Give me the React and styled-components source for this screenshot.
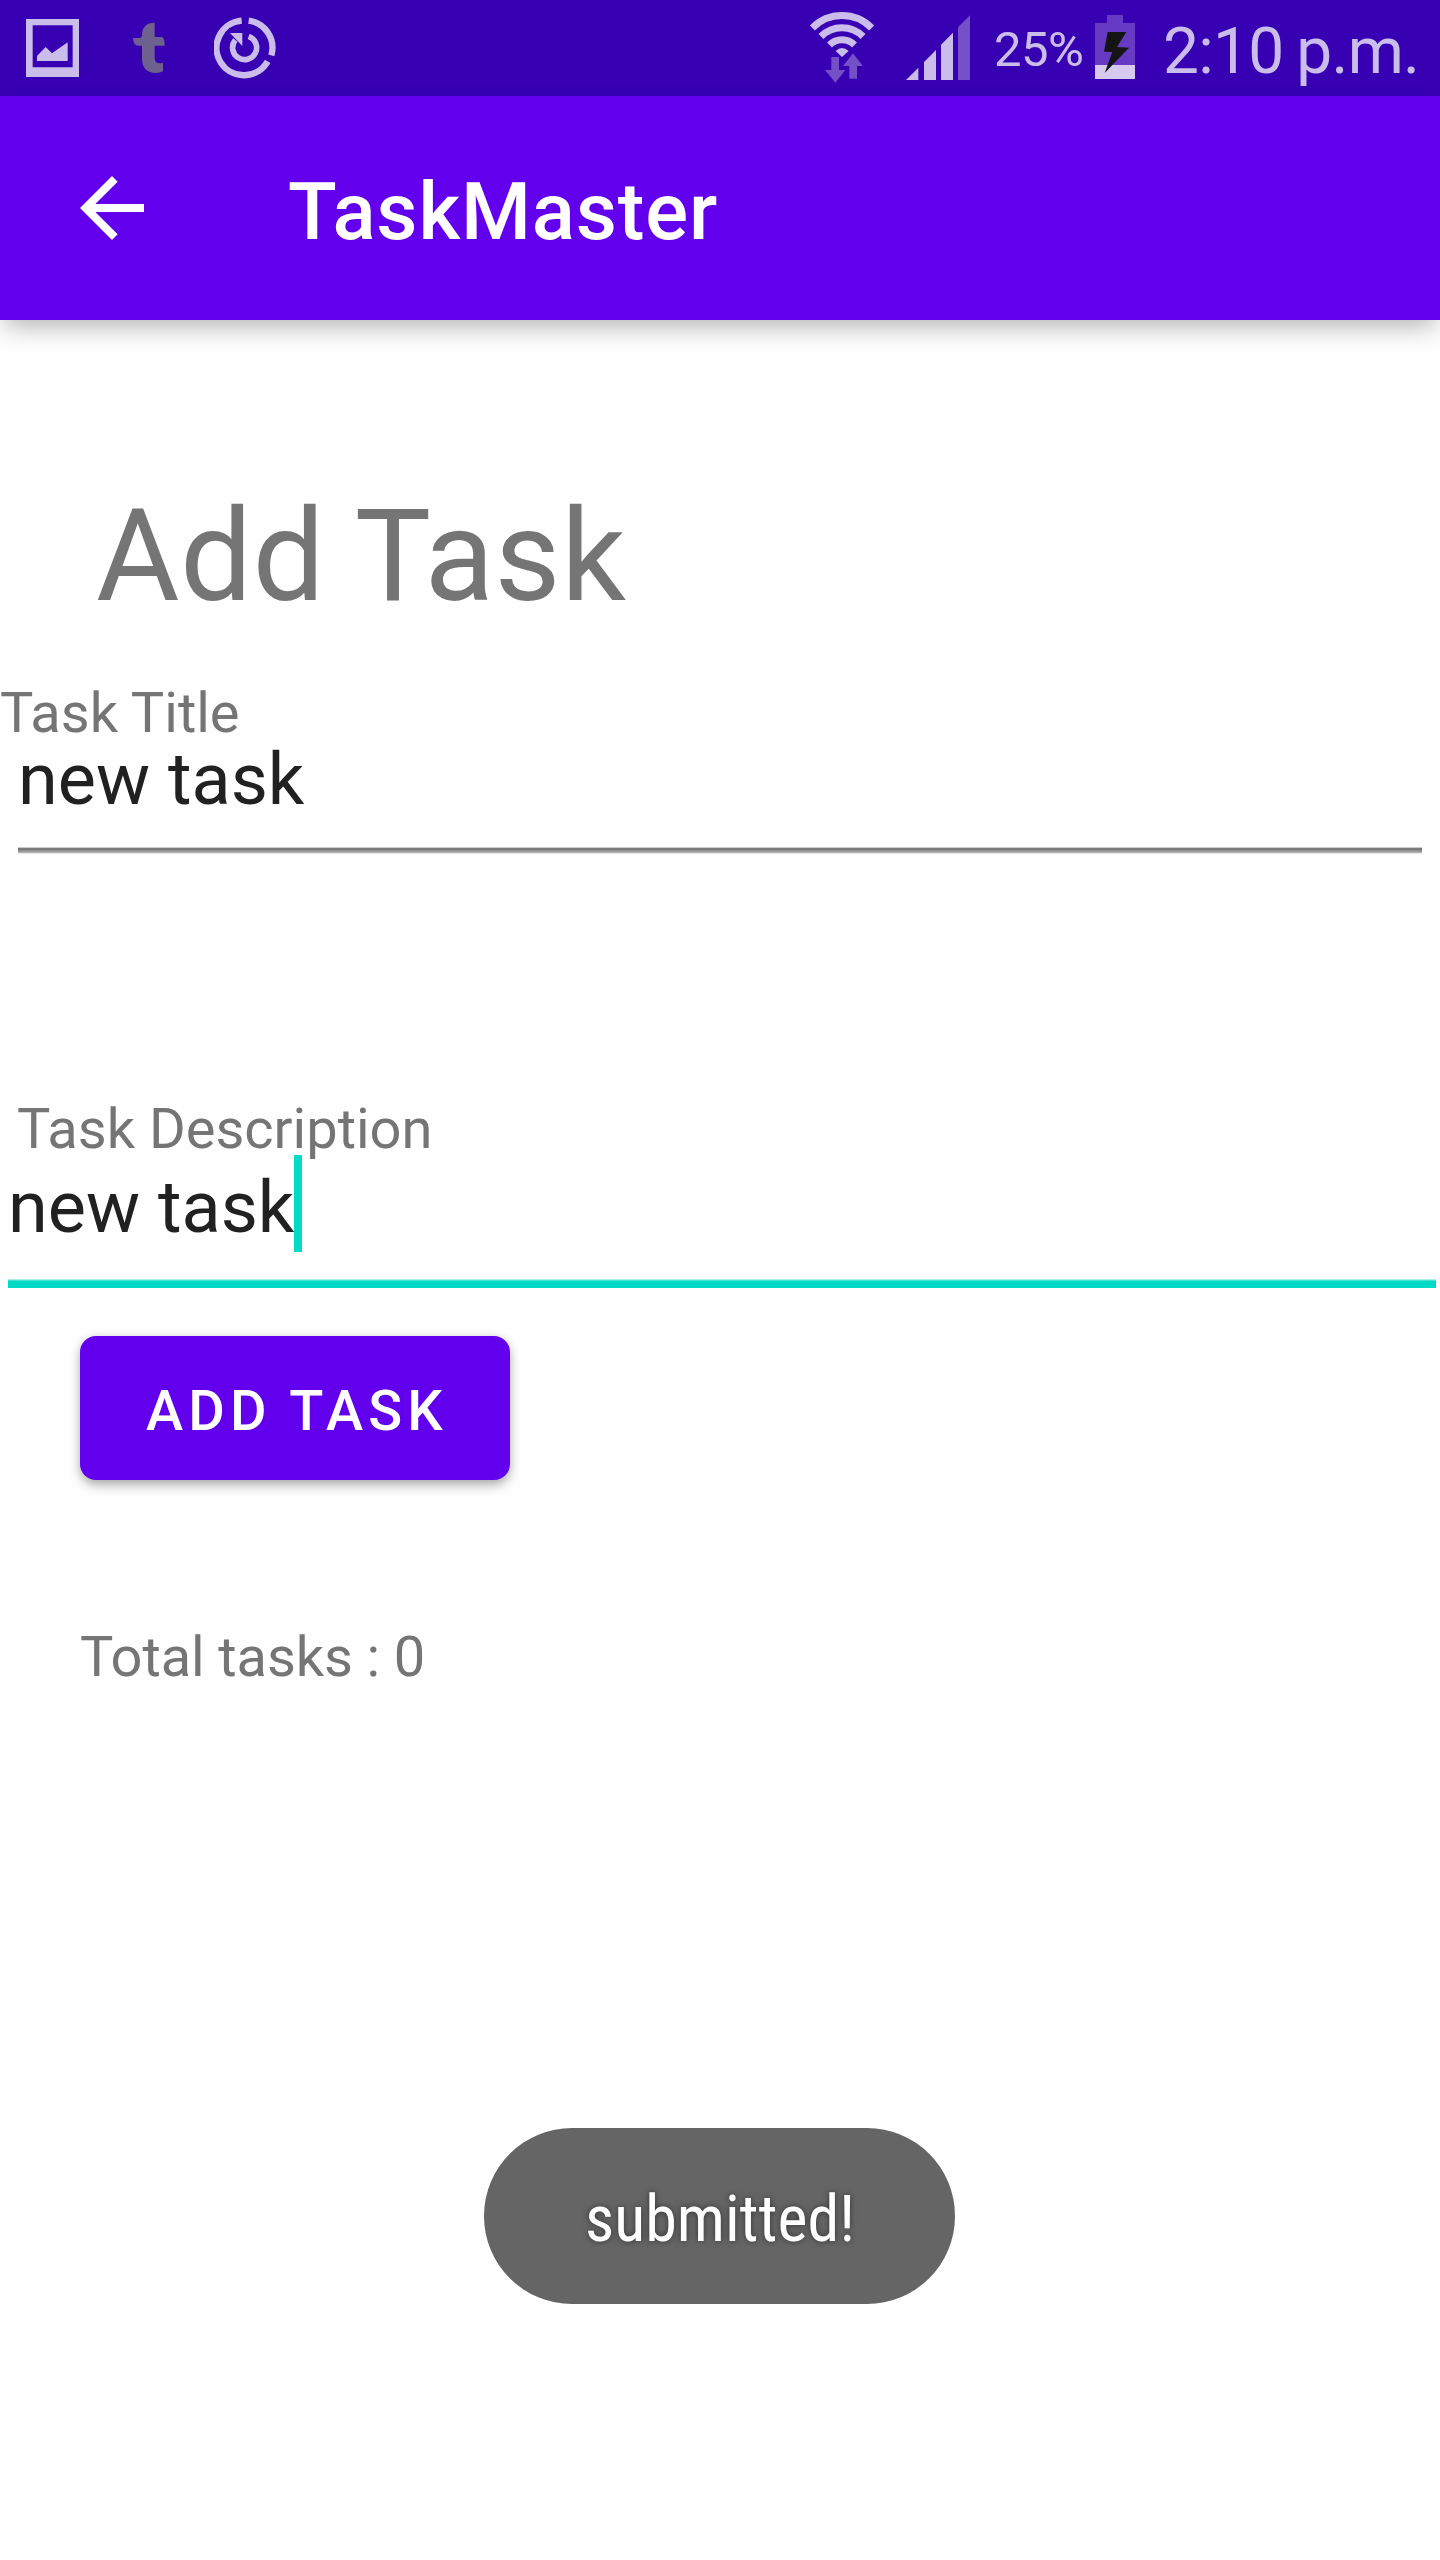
import React from "react";
import styled, { createGlobalStyle } from "styled-components";

const GlobalStyle = createGlobalStyle`
  *, *::before, *::after { box-sizing: border-box; }
  body {
    margin: 0;
    background: #fefefe;
    font-family: Roboto, "Noto Sans", sans-serif;
  }
`;

const Screen = styled.div`
  position: relative;
  width: 1440px;
  height: 2560px;
  display: flex;
  flex-direction: column;
  overflow: hidden;
  background: #fefefe;
`;

const StatusBar = styled.header`
  height: 96px;
  flex: none;
  display: flex;
  justify-content: space-between;
  background: #3700b3;
  color: #cbbdeb;
`;

const StatusGroup = styled.div`
  display: flex;
  align-items: flex-start;
  padding-left: ${(p) => p.$left || 0}px;
  padding-right: ${(p) => p.$right || 0}px;
`;

const Glyph = styled.svg`
  display: block;
  flex: none;
  margin-top: ${(p) => p.$top || 0}px;
  margin-left: ${(p) => p.$gap || 0}px;
`;

const BatteryPercent = styled.span`
  width: 91px;
  margin-left: 24px;
  font-size: 49px;
  line-height: 99px;
  letter-spacing: -0.6px;
  white-space: nowrap;
`;

const Clock = styled.span`
  width: 259px;
  margin-left: 28px;
  font-size: 64px;
  line-height: 103px;
  letter-spacing: -0.7px;
  word-spacing: -2.5px;
  white-space: nowrap;
`;

const AppBar = styled.nav`
  position: relative;
  height: 224px;
  flex: none;
  display: flex;
  align-items: center;
  padding-left: 64px;
  background: #6200ee;
  color: #fff;
  box-shadow: 0 11px 24px -5px rgba(0, 0, 0, 0.3);
`;

const AppTitle = styled.h1`
  margin: 7px 0 0 128px;
  font-size: 80px;
  font-weight: 500;
  line-height: 96px;
  letter-spacing: 0.85px;
`;

const Content = styled.main`
  display: flex;
  flex-direction: column;
  align-items: flex-start;
  padding-top: 161px;
`;

const Heading = styled.h2`
  margin: 0 0 54px 96px;
  font-size: 128px;
  font-weight: 400;
  line-height: 150px;
  letter-spacing: 0.4px;
  color: #757575;
`;

const Field = styled.section`
  width: 100%;
  display: flex;
  flex-direction: column;
`;

const Label = styled.label`
  padding-left: ${(p) => p.$inset}px;
  font-size: 56px;
  line-height: 57px;
  color: #757575;
`;

const InputBox = styled.div`
  display: flex;
  margin: ${(p) => p.$margin};
  padding-bottom: ${(p) => p.$pad}px;
`;

const Value = styled.span`
  position: relative;
  font-size: 72px;
  line-height: 76px;
  color: #212121;
`;

const Caret = styled.i`
  position: absolute;
  left: 286px;
  top: -15px;
  width: 8px;
  height: 97px;
  background: #03dac5;
`;

const Rule = styled.div`
  margin: 0 18px 247px;
  height: 7px;
  background: linear-gradient(
    #cbcbcb 0 1px, #7b7b7b 1px 3px, #8f8f8f 3px 4px,
    #9c9c9c 4px 5px, #b5b5b5 5px 6px, #e6e6e6 6px 7px
  );
`;

const ActiveRule = styled.div`
  margin: 0 4px 0 8px;
  height: 9px;
  background: linear-gradient(#a9f0e9 0 1px, #45e2d3 1px 2px, #03dac5 2px);
`;

const AddButton = styled.button`
  width: 430px;
  height: 144px;
  margin: 48px 0 0 80px;
  padding: 6px 0 0 66px;
  border: 0;
  border-radius: 16px;
  background: #6200ee;
  color: #fff;
  font: 500 56px/66px Roboto, sans-serif;
  letter-spacing: 5.1px;
  text-align: left;
  text-transform: uppercase;
  white-space: nowrap;
  box-shadow: 0 6px 12px -1px rgba(0, 0, 0, 0.3), 0 0 8px rgba(0, 0, 0, 0.1);
`;

const Total = styled.p`
  margin: 144px 0 0 80px;
  font-size: 56px;
  line-height: 66px;
  letter-spacing: -0.1px;
  color: #757575;
`;

const Toast = styled.div`
  position: absolute;
  left: 484px;
  top: 2128px;
  width: 471px;
  height: 176px;
  display: flex;
  align-items: center;
  justify-content: center;
  padding: 8px 0 0 1px;
  border-radius: 88px;
  background: #656565;
  color: #fff;
`;

const ToastText = styled.span`
  font-size: 64px;
  font-stretch: 75%;
  line-height: 76px;
  text-shadow: 0 0 6px rgba(0, 0, 0, 0.5);
`;

function PictureIcon() {
  return (
    <Glyph $top={19} width="53" height="58" viewBox="78 57 159 174" fill="currentColor">
      <path fillRule="evenodd" d="M78 57H237V231H78ZM98 76V202H218V76Z" />
      <path d="M111 168 137 141 156 160 203 127V183H111Z" />
    </Glyph>
  );
}

function TumblrIcon() {
  return (
    <Glyph $top={22} $gap={54} width="32" height="52" viewBox="399 66 96 156" fill="#6f618f">
      <path d="M464 68V111H485Q494 111 494 137H464V172Q464 190 478 190Q484 190 489 188V214Q480 219 468 219Q426 217 426 176V137H417Q399 137 399 114H420Q426 114 426 106Q426 68 464 68Z" />
    </Glyph>
  );
}

function SyncRingIcon() {
  return (
    <Glyph $top={17} $gap={49} width="62" height="62" viewBox="642 51 186 186" fill="none" stroke="currentColor">
      <path strokeWidth="19" d="M746 62A82 82 0 0 1 814 166M803 184A82 82 0 1 1 725 62" />
      <path strokeWidth="17" d="M746 109A36 36 0 1 1 706 120" />
      <path fill="currentColor" stroke="none" d="M690 99H727V138Z" />
    </Glyph>
  );
}

function WifiIcon() {
  return (
    <Glyph $top={12} width="66" height="71" viewBox="57 36 198 213" fill="none">
      <g stroke="currentColor" strokeWidth="21">
        <path d="M67 84A125 125 0 0 1 245 84" />
        <path d="M93 109.500A89 89 0 0 1 219 109.500" />
        <path d="M118.500 135A53 53 0 0 1 193.500 135" />
      </g>
      <path fill="currentColor" d="M156 171 137 153Q156 135 176 153Z" />
      <path fill="#744fc8" d="M124 171H147V210H166L136 248 105 210H124ZM178 236V198H159L189 160 219 198H201V236Z" />
    </Glyph>
  );
}

function SignalIcon() {
  return (
    <Glyph $top={15} $gap={31} width="64" height="65" viewBox="348 45 192 195" fill="currentColor">
      <path d="M348 240 385 203V240ZM402 186 438 150V240H402ZM453 134 489 98V240H453Z" />
      <path fill="#744fc8" d="M504 82 540 46V240H504Z" />
    </Glyph>
  );
}

function BatteryIcon() {
  return (
    <Glyph $top={15} $gap={10} width="40" height="64" viewBox="915 45 120 192">
      <path fill="#663ac2" d="M951 45H999V69H1035V195H915V69H951Z" />
      <path fill="#d8caee" d="M915 195H1035V237H915Z" />
      <path fill="#141414" d="M953 96H1009L981 141 1017 143 944 219 967 156 942 155Z" />
    </Glyph>
  );
}

function BackIcon() {
  return (
    <Glyph width="96" height="96" viewBox="0 0 24 24" fill="currentColor">
      <path d="M20 11H7.830L13.420 5.410 12 4 4 12 12 20 13.410 18.590 7.830 13H20Z" />
    </Glyph>
  );
}

export default function App() {
  return (
    <>
      <GlobalStyle />
      <Screen>
        <StatusBar>
          <StatusGroup $left={26}>
            <PictureIcon />
            <TumblrIcon />
            <SyncRingIcon />
          </StatusGroup>
          <StatusGroup $right={18}>
            <WifiIcon />
            <SignalIcon />
            <BatteryPercent>25%</BatteryPercent>
            <BatteryIcon />
            <Clock>2:10 p.m.</Clock>
          </StatusGroup>
        </StatusBar>
        <AppBar>
          <BackIcon />
          <AppTitle>TaskMaster</AppTitle>
        </AppBar>
        <Content>
          <Heading>Add Task</Heading>
          <Field>
            <Label $inset={0}>Task Title</Label>
            <InputBox $margin="0 18px" $pad={29}>
              <Value>new task</Value>
            </InputBox>
            <Rule />
          </Field>
          <Field>
            <Label $inset={17}>Task Description</Label>
            <InputBox $margin="12px 4px 0 8px" $pad={33}>
              <Value>
                new task
                <Caret />
              </Value>
            </InputBox>
            <ActiveRule />
          </Field>
          <AddButton type="button">Add Task</AddButton>
          <Total>Total tasks : 0</Total>
        </Content>
        <Toast>
          <ToastText>submitted!</ToastText>
        </Toast>
      </Screen>
    </>
  );
}
